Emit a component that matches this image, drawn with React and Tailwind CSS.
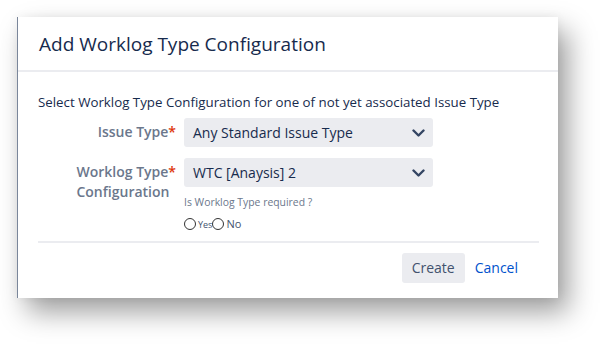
import React from 'react';

function Chevron() {
  return (
    <svg width="13" height="8" viewBox="0 0 13 8" fill="none">
      <path d="M1.5 1.5l5 5 5-5" stroke="#344563" strokeWidth="2.4" strokeLinecap="round" strokeLinejoin="round" />
    </svg>
  );
}

function Select({ value }) {
  return (
    <div className="h-[29px] w-[249px] rounded-[3px] bg-[#ebecf0] flex items-center justify-between pl-[9px] pr-[8px] text-[14px] text-[#172b4d]">
      <span>{value}</span>
      <Chevron />
    </div>
  );
}

function Radio({ label, size }) {
  return (
    <label className="flex items-center">
      <span className="w-[12px] h-[12px] rounded-full border border-[#333] bg-white" />
      <span className={`${size} text-[#42526e] ml-[2px]`}>{label}</span>
    </label>
  );
}

export default function App() {
  return (
    <div className="w-[606px] h-[346px] bg-white pl-[17px] pt-[17px] overflow-hidden" style={{ fontFamily: '"Open Sans", "Noto Sans", sans-serif' }}>
      <div className="w-[541px] h-[281px] bg-white border-l border-[#7a869a] shadow-[0_0_10px_rgba(0,0,0,0.05),10px_14px_26px_rgba(0,0,0,0.38)] flex flex-col">
        {/* header */}
        <div className="h-[55px] border-b-2 border-[#ebecf0] px-[21px] flex items-center pt-[2px]">
          <h2 className="text-[19px] font-normal text-[#172b4d]">Add Worklog Type Configuration</h2>
        </div>

        {/* body */}
        <div className="px-5 pt-[20px]">
          <p className="text-[13.3px] leading-5 text-[#172b4d]">
            Select Worklog Type Configuration for one of not yet associated Issue Type
          </p>

          <div className="grid grid-cols-[138px_249px] gap-x-2 gap-y-[11px] mt-[6px]">
            <div className="flex justify-end pt-[4px]">
              <div className="text-[14px] leading-5 font-semibold text-[#6b778c]">
                Issue Type<span className="text-[#de350b]">*</span>
              </div>
            </div>
            <Select value="Any Standard Issue Type" />

            <div className="flex justify-end pt-[4px]">
              <div className="text-[14px] leading-5 font-semibold text-[#6b778c]">
                Worklog Type<span className="text-[#de350b]">*</span>
                <br />
                Configuration
              </div>
            </div>
            <div>
              <Select value="WTC [Anaysis] 2" />
              <div className="mt-[8px] text-[10.4px] leading-[14px] text-[#6b778c]">Is Worklog Type required ?</div>
              <div className="mt-[7px] flex items-center">
                <Radio label="Yes" size="text-[9px]" />
                <Radio label="No" size="text-[11px]" />
              </div>
            </div>
          </div>

          <div className="mt-[8px] h-[2px] w-[501px] bg-[#ebecf0]" />

          <div className="flex justify-end items-center gap-[10px] pt-[10px] pr-[20px]">
            <button className="h-[30px] px-[10px] rounded-[3px] bg-[#ebecf0] text-[14px] text-[#42526e]">Create</button>
            <a className="text-[14px] text-[#0052cc]">Cancel</a>
          </div>
        </div>
      </div>
    </div>
  );
}
